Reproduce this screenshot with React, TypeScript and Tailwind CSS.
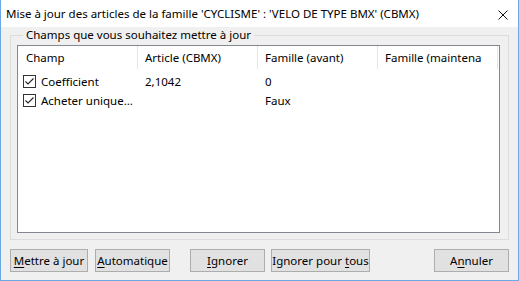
import React from "react";

const font = { fontFamily: '"Noto Sans", "Open Sans", sans-serif' };

type Row = { champ: string; article: string; avant: string; maint: string };

const rows: Row[] = [
  { champ: "Coefficient", article: "2,1042", avant: "0", maint: "" },
  { champ: "Acheter unique...", article: "", avant: "Faux", maint: "" },
];

const CheckBox = () => (
  <svg width="13" height="13" viewBox="0 0 13 13" className="shrink-0">
    <rect x="0.5" y="0.5" width="12" height="12" fill="#fff" stroke="#333" />
    <path d="M2.5 6.5 L5 9 L10.5 3.5" fill="none" stroke="#222" strokeWidth="1.1" />
  </svg>
);

const Btn = ({
  w,
  pre,
  key_,
  post,
}: {
  w: string;
  pre: string;
  key_: string;
  post: string;
}) => (
  <button
    className={`${w} h-[23px] bg-[#e1e1e1] border border-[#adadad] text-[11.5px] text-black flex items-center justify-center leading-none whitespace-nowrap shrink-0`}
  >
    <span>
      {pre}
      <span className="underline underline-offset-2">{key_}</span>
      {post}
    </span>
  </button>
);

const App = () => {
  return (
    <div
      className="w-[519px] h-[281px] flex flex-col border-x border-b border-[#6aa8e6] bg-[#f0f0f0] text-black"
      style={font}
    >
      <div className="h-[27px] bg-white flex items-center justify-between pl-[5px] pr-[10px] shrink-0">
        <span className="text-[11.5px]">
          Mise à jour des articles de la famille 'CYCLISME' : 'VELO DE TYPE BMX' (CBMX)
        </span>
        <svg width="10" height="10" viewBox="0 0 10 10" className="mt-[2px]">
          <path d="M0.5 0.5 L9.5 9.5 M9.5 0.5 L0.5 9.5" stroke="#111" strokeWidth="1" />
        </svg>
      </div>

      <div className="flex-1 flex flex-col px-[9px] pb-[8px]">
        <fieldset className="border border-[#dcdcdc] pl-[6px] pr-[8px] pb-[6px]">
          <legend className="ml-[6px] px-[3px] text-[11.5px] leading-[16px]">
            Champs que vous souhaitez mettre à jour
          </legend>
          <div className="mt-[2px] h-[188px] border border-[#828790] bg-white flex flex-col text-[11.5px]">
            <div className="flex h-[23px] items-center shrink-0">
              {["Champ", "Article (CBMX)", "Famille (avant)", "Famille (maintena"].map(
                (h, i) => (
                  <div
                    key={h}
                    className={`w-[120px] h-full flex items-center border-r border-[#e5e5e5] whitespace-nowrap overflow-hidden ${
                      i === 0 ? "pl-[8px]" : "pl-[7px]"
                    }`}
                  >
                    {h}
                  </div>
                )
              )}
            </div>
            <div className="pt-[3px] flex flex-col">
              {rows.map((r) => (
                <div key={r.champ} className="flex h-[19px] items-center">
                  <div className="w-[120px] flex items-center pl-[5px] gap-[5px] whitespace-nowrap">
                    <CheckBox />
                    <span>{r.champ}</span>
                  </div>
                  <div className="w-[120px] pl-[7px]">{r.article}</div>
                  <div className="w-[120px] pl-[7px]">{r.avant}</div>
                  <div className="w-[120px] pl-[7px]">{r.maint}</div>
                </div>
              ))}
            </div>
          </div>
        </fieldset>

        <div className="mt-[9px] flex items-center">
          <Btn w="w-[78px]" pre="" key_="M" post="ettre à jour" />
          <div className="w-[7px]" />
          <Btn w="w-[75px]" pre="" key_="A" post="utomatique" />
          <div className="w-[20px]" />
          <Btn w="w-[75px]" pre="" key_="I" post="gnorer" />
          <div className="w-[6px]" />
          <Btn w="w-[99px]" pre="Ignorer pour " key_="t" post="ous" />
          <div className="flex-1" />
          <Btn w="w-[75px]" pre="A" key_="n" post="nuler" />
        </div>
      </div>
    </div>
  );
};

export default App;
